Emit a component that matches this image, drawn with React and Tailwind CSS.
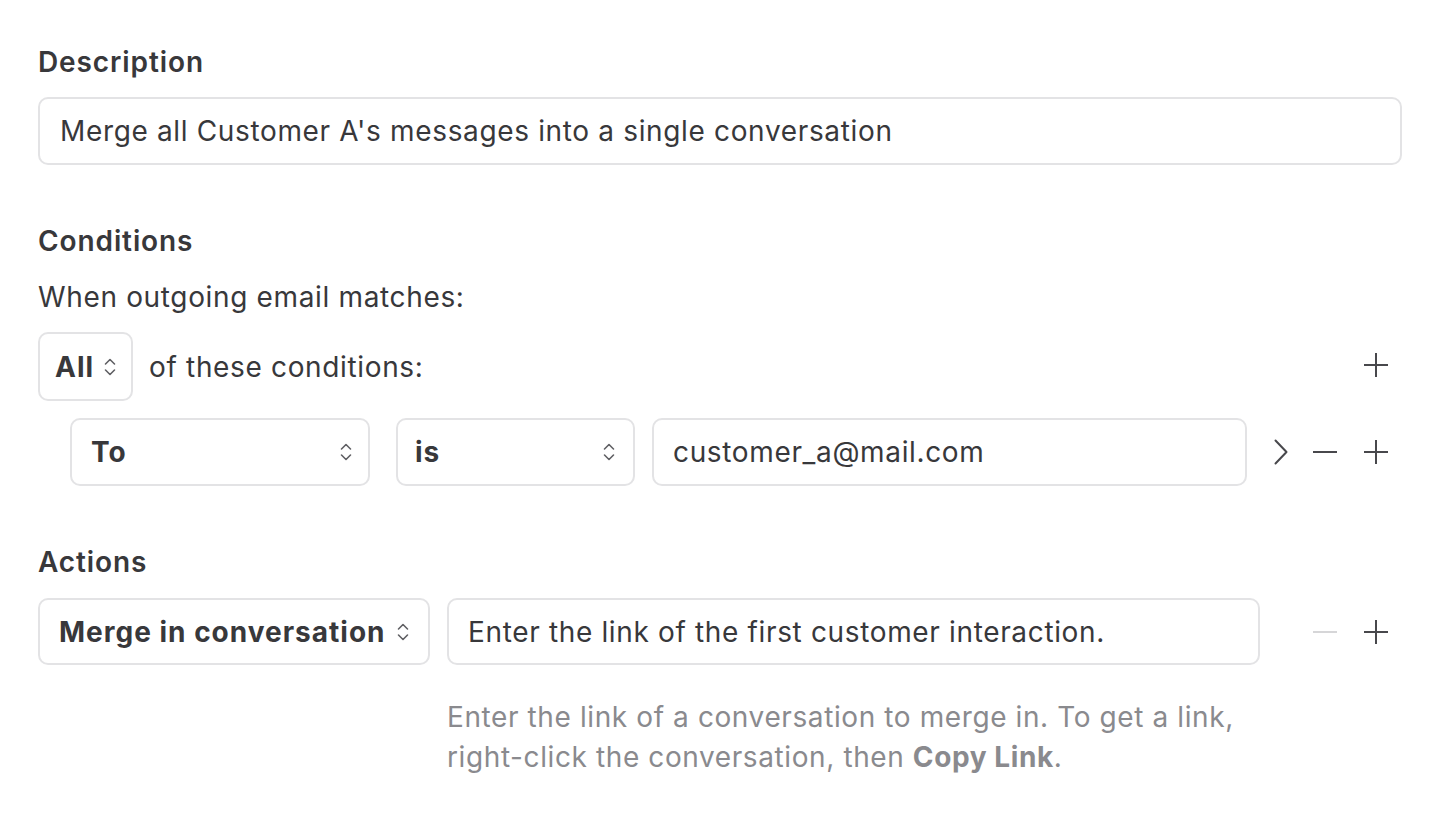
import React from "react";

const font = { fontFamily: "Inter, 'Noto Sans', sans-serif" };

function UpDown() {
  return (
    <svg width="14" height="22" viewBox="0 0 14 22" fill="none" stroke="#606064" strokeWidth="1.6" strokeLinecap="round" strokeLinejoin="round">
      <path d="M2.5 8 L7 3.5 L11.5 8" />
      <path d="M2.5 14 L7 18.5 L11.5 14" />
    </svg>
  );
}

function Plus({ color = "#48484c" }) {
  return (
    <svg width="24" height="24" viewBox="0 0 24 24" fill="none" stroke={color} strokeWidth="2">
      <path d="M0 12 H24" />
      <path d="M12 0 V24" />
    </svg>
  );
}

function Minus({ color = "#48484c" }) {
  return (
    <svg width="24" height="24" viewBox="0 0 24 24" fill="none" stroke={color} strokeWidth="2">
      <path d="M0 12 H24" />
    </svg>
  );
}

function Chevron() {
  return (
    <svg width="14" height="26" viewBox="0 0 14 26" fill="none" stroke="#48484c" strokeWidth="2" strokeLinecap="round" strokeLinejoin="round">
      <path d="M1.5 1.5 L12.5 13 L1.5 24.5" />
    </svg>
  );
}

export default function App() {
  return (
    <div className="w-[1437px] h-[817px] bg-white text-[#38383b] pt-[45px] pl-[38px] pr-[35px] tracking-[0.65px]" style={font}>
      <div className="text-[28px] font-semibold leading-[34px] tracking-[0.9px]">Description</div>
      <div className="mt-[18px] h-[68px] border-2 border-[#e3e3e5] rounded-[10px] px-[20px] flex items-center text-[28px]">
        Merge all Customer A's messages into a single conversation
      </div>

      <div className="mt-[59px] text-[28px] font-semibold leading-[34px] tracking-[0.9px]">Conditions</div>
      <div className="mt-[22px] text-[28px] leading-[34px]">When outgoing email matches:</div>

      <div className="mt-[18px] flex items-center">
        <div className="h-[69px] border-2 border-[#e3e3e5] rounded-[10px] pl-[15px] pr-[14px] flex items-center gap-[9px]">
          <span className="text-[28px] font-bold tracking-[1px]">All</span>
          <UpDown />
        </div>
        <div className="ml-[16px] flex-1 text-[28px]">of these conditions:</div>
        <div className="mr-[14px] -mt-[4px]">
          <Plus />
        </div>
      </div>

      <div className="mt-[17px] pl-[32px] flex items-center">
        <div className="w-[300px] h-[68px] border-2 border-[#e3e3e5] rounded-[10px] pl-[19px] pr-[15px] flex items-center justify-between">
          <span className="text-[28px] font-bold tracking-[1px]">To</span>
          <UpDown />
        </div>
        <div className="ml-[26px] w-[239px] h-[68px] border-2 border-[#e3e3e5] rounded-[10px] pl-[17px] pr-[17px] flex items-center justify-between">
          <span className="text-[28px] font-bold tracking-[1px]">is</span>
          <UpDown />
        </div>
        <div className="ml-[17px] flex-1 h-[68px] border-2 border-[#e3e3e5] rounded-[10px] px-[19px] flex items-center text-[28px]">
          customer_a@mail.com
        </div>
        <div className="ml-[27px] flex items-center">
          <Chevron />
        </div>
        <div className="ml-[25px] flex items-center">
          <Minus />
        </div>
        <div className="ml-[27px] mr-[14px] flex items-center">
          <Plus />
        </div>
      </div>

      <div className="mt-[59px] text-[28px] font-semibold leading-[34px] tracking-[0.9px]">Actions</div>

      <div className="mt-[19px] flex items-center">
        <div className="w-[392px] h-[67px] border-2 border-[#e3e3e5] rounded-[10px] pl-[19px] pr-[18px] flex items-center justify-between">
          <span className="text-[28px] font-bold whitespace-nowrap tracking-[1px]">Merge in conversation</span>
          <UpDown />
        </div>
        <div className="ml-[17px] flex-1 h-[67px] border-2 border-[#e3e3e5] rounded-[10px] px-[19px] flex items-center text-[28px]">
          Enter the link of the first customer interaction.
        </div>
        <div className="ml-[53px] flex items-center">
          <Minus color="#d6d6d8" />
        </div>
        <div className="ml-[27px] mr-[14px] flex items-center">
          <Plus />
        </div>
      </div>

      <div className="mt-[32px] ml-[409px] text-[28px] leading-[40px] text-[#8a8a8e] tracking-[0.6px]">
        <div>Enter the link of a conversation to merge in. To get a link,</div>
        <div>
          right-click the conversation, then <span className="font-bold tracking-[0.6px]">Copy Link</span>.
        </div>
      </div>
    </div>
  );
}
